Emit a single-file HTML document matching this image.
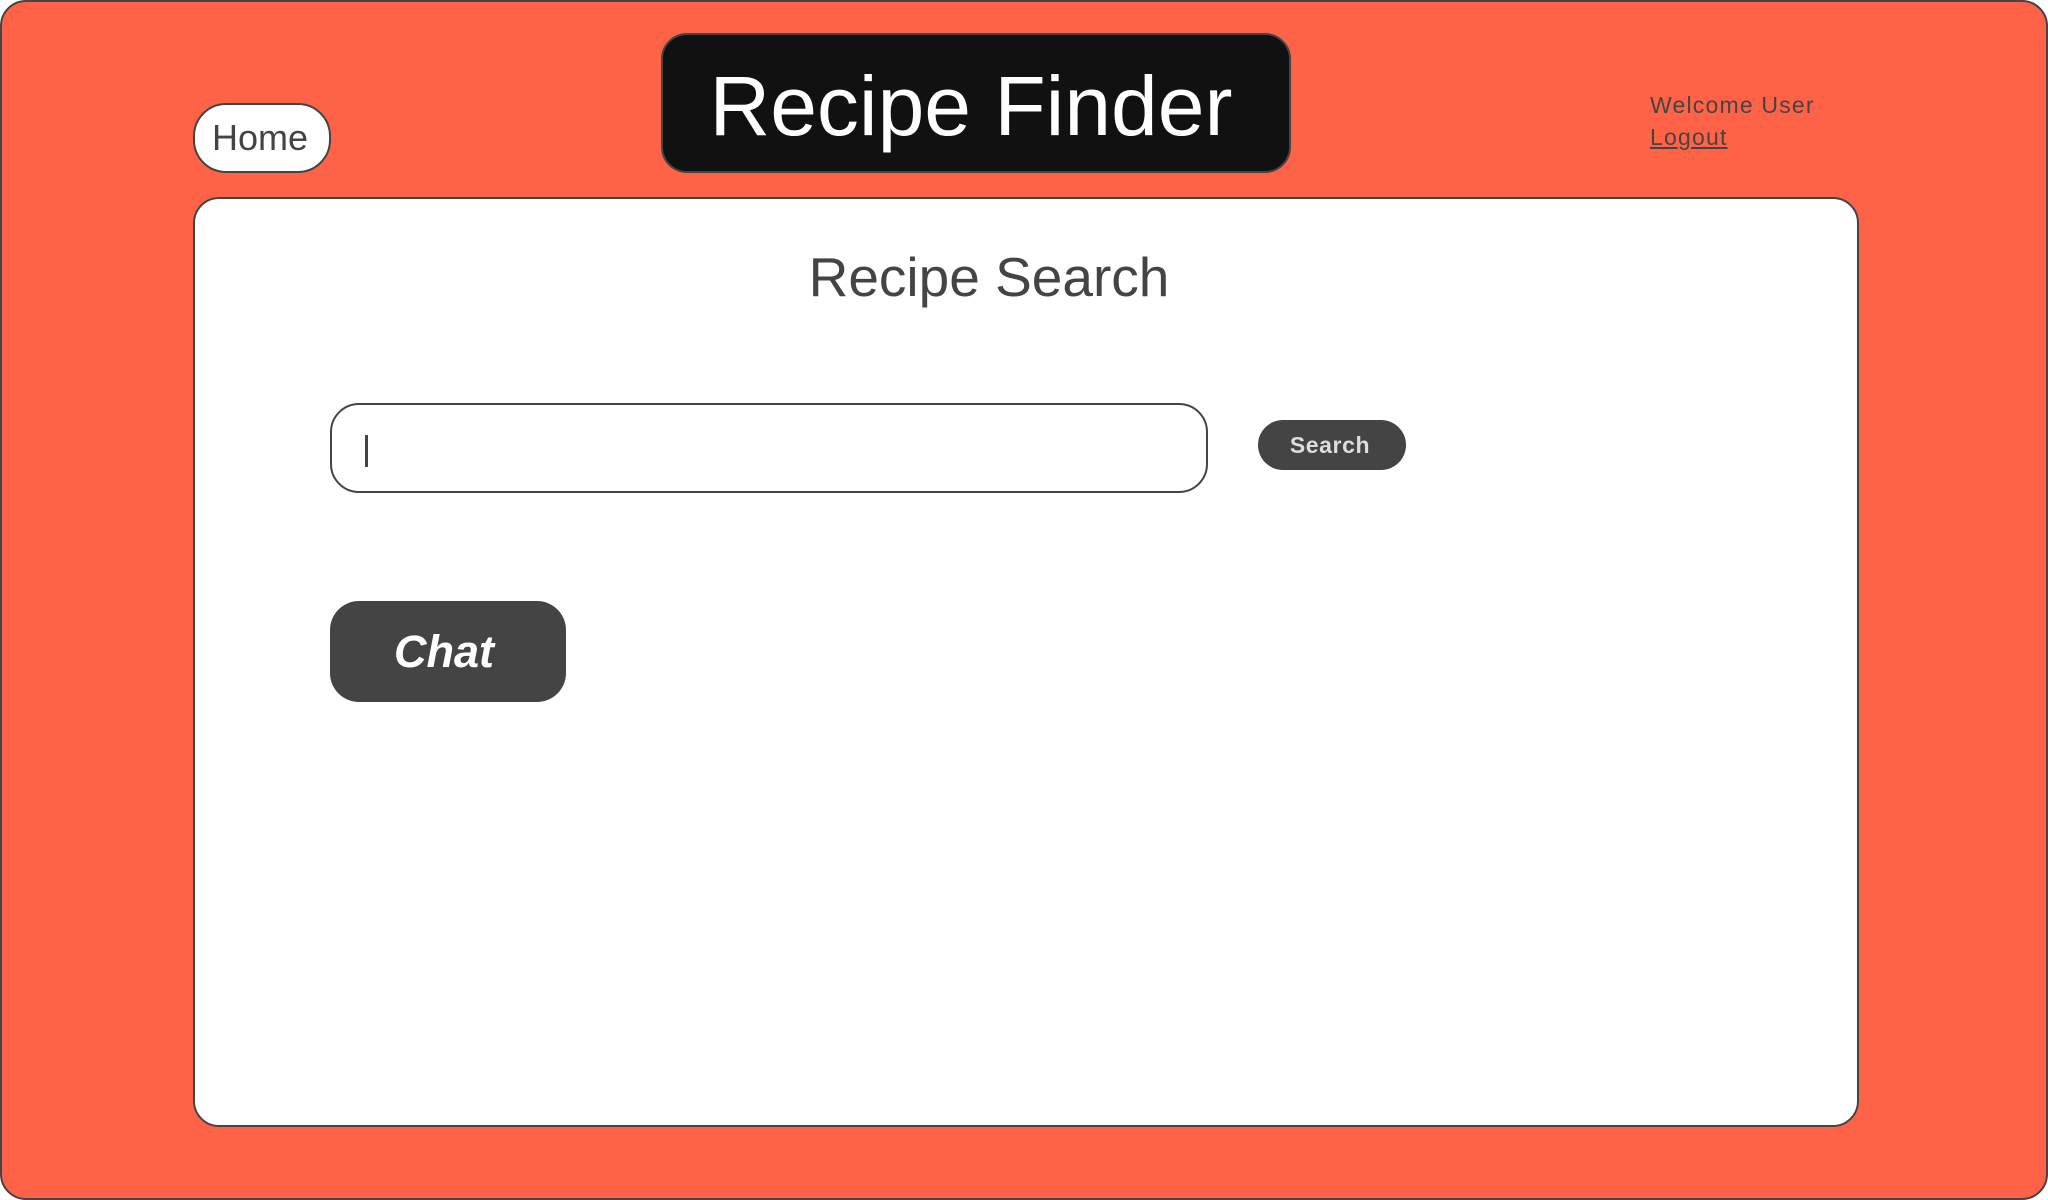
<!DOCTYPE html>
<html><head><meta charset="utf-8"><style>
*{margin:0;padding:0;box-sizing:border-box}
body{width:2048px;height:1200px;background:#fff;font-family:"Liberation Sans",Arial,sans-serif;position:relative;overflow:hidden}
.frame{position:absolute;left:0;top:0;width:2048px;height:1200px;background:#ff6347;border:2px solid #444;border-radius:26px}
.home{position:absolute;left:193px;top:103px;width:138px;height:70px;background:#fff;border:2px solid #444;border-radius:33px;color:#444;font-size:36px;line-height:66px;text-align:center;padding-right:4px}
.title{position:absolute;left:661px;top:33px;width:630px;height:140px;background:#111;border:2px solid #444;border-radius:26px;color:#fff;font-size:84px;line-height:142px;text-align:center;padding-right:10px}
.welcome{position:absolute;left:1650px;top:89px;color:#444;font-size:23px;letter-spacing:1.2px;line-height:32px}
.welcome u{text-decoration:underline}
.card{position:absolute;left:193px;top:197px;width:1666px;height:930px;background:#fff;border:2px solid #444;border-radius:26px}
.h{position:absolute;left:689px;width:600px;top:242px;text-align:center;color:#444;font-size:55px;line-height:70px}
.input{position:absolute;left:330px;top:403px;width:878px;height:90px;border:2px solid #444;border-radius:29px;background:#fff}
.caret{position:absolute;left:365px;top:435px;width:3px;height:32px;background:#444}
.sbtn{position:absolute;left:1258px;top:420px;width:148px;height:50px;background:#444;border-radius:25px;color:#ddd;font-weight:bold;font-size:23px;letter-spacing:0.6px;line-height:50px;text-align:center;padding-right:4px}
.chat{position:absolute;left:330px;top:601px;width:236px;height:101px;background:#444;border-radius:29px;color:#fff;font-weight:bold;font-style:italic;font-size:45px;line-height:101px;text-align:center;padding-right:8px}
</style></head><body>
<div class="frame"></div>
<div class="home">Home</div>
<div class="title">Recipe Finder</div>
<div class="welcome">Welcome User<br><u>Logout</u></div>
<div class="card"></div>
<div class="h">Recipe Search</div>
<div class="input"></div>
<div class="caret"></div>
<div class="sbtn">Search</div>
<div class="chat">Chat</div>
</body></html>
